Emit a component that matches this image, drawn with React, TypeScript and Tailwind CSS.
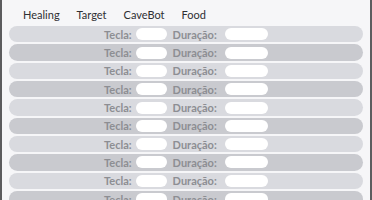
const tabs = ['Healing', 'Target', 'CaveBot', 'Food'];
const rows = Array.from({ length: 10 }, (_, i) => i);

function KeyRow({ dark }: { dark: boolean }) {
  return (
    <div
      className={`flex h-[16.4px] shrink-0 items-center justify-center rounded-full ${
        dark ? 'bg-[#c9cacf]' : 'bg-[#d9dadf]'
      }`}
    >
      <div className="flex w-[164px] items-center">
        <span className="text-[11px] font-bold leading-none text-[#8d8e93]">Tecla:</span>
        <div className="ml-[4px] h-[12px] w-[31px] rounded-full bg-white" />
        <span className="ml-[6px] text-[11px] font-bold leading-none text-[#8d8e93]">Duração:</span>
        <div className="ml-auto h-[12px] w-[43px] rounded-full bg-white" />
      </div>
    </div>
  );
}

export default function App() {
  return (
    <div
      className="h-[200px] w-[372px] overflow-hidden border-x-2 border-[#5c5c5e] bg-[#f6f6f8]"
      style={{ fontFamily: 'Lato, "Open Sans", sans-serif' }}
    >
      {/* tabs */}
      <div className="flex h-[26px] items-center gap-[17px] pl-[21px] pt-[3px]">
        {tabs.map(t => (
          <span key={t} className="text-[11px] leading-none text-[#2f2f33]">
            {t}
          </span>
        ))}
      </div>

      {/* key rows */}
      <div className="flex flex-col gap-[1.95px] px-[7px]">
        {rows.map(i => (
          <KeyRow key={i} dark={i % 2 === 1} />
        ))}
      </div>
    </div>
  );
}
